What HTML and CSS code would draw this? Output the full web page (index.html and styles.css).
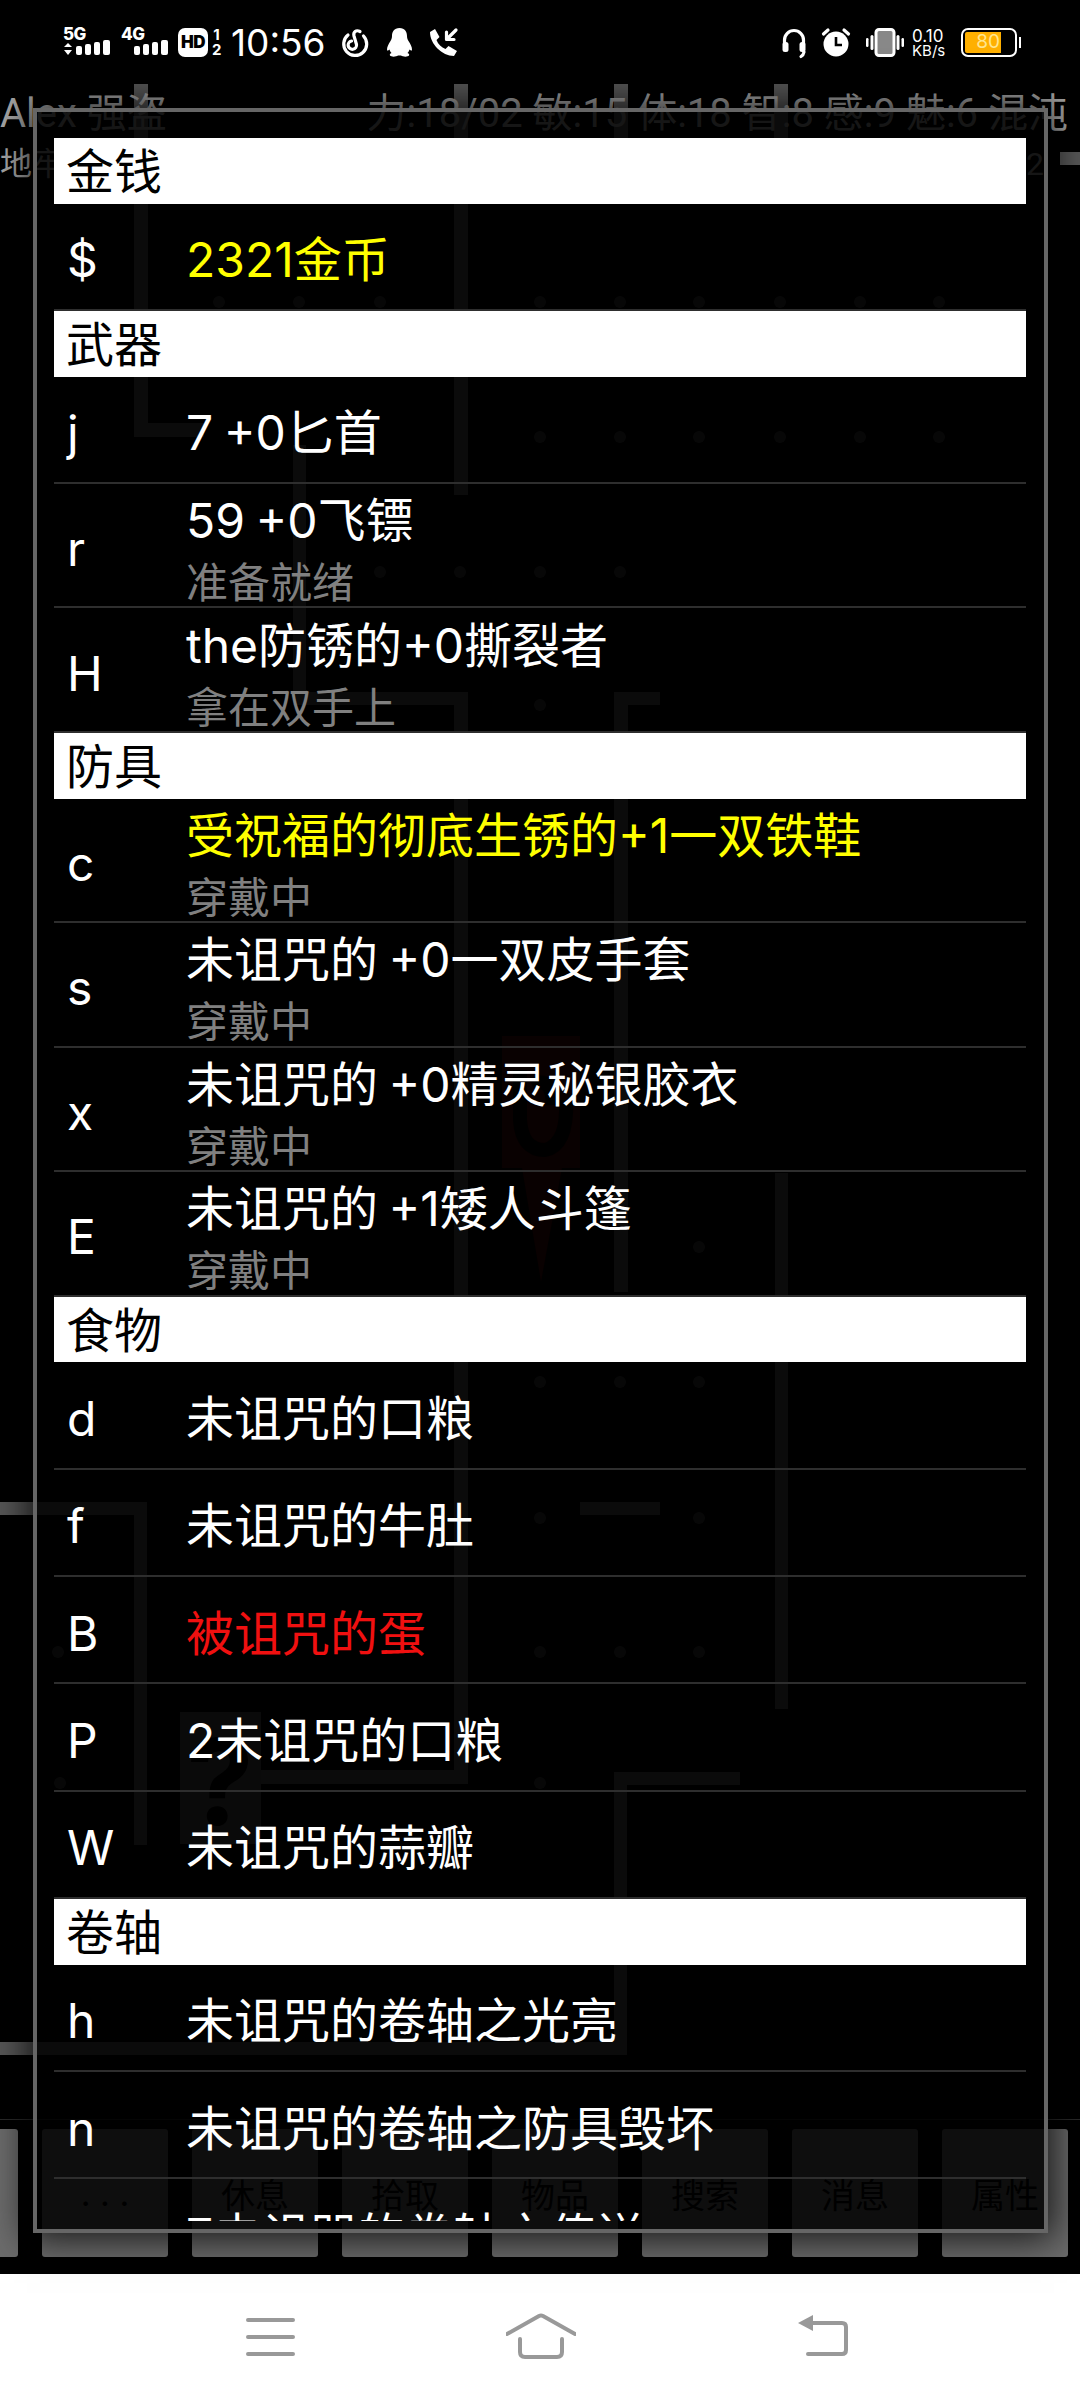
FILE: index.html
```html
<!DOCTYPE html>
<html lang="zh">
<head>
  <meta charset="UTF-8">
  <title>物品</title>
  <link rel="stylesheet" href="styles.css">
</head>
<body>
  <div class="status-bar">
    <div class="status-left">
      <svg class="icon" width="48" height="29" viewBox="0 0 48 29">
        <text class="net-label" x="0" y="12">5G</text>
        <path class="solid" d="M1 19 L5 15 L9 19 Z M1 22 L9 22 L5 27 Z"/>
        <rect class="solid" x="13" y="18" width="6" height="9" rx="2"/>
        <rect class="solid" x="22" y="16" width="6" height="11" rx="2"/>
        <rect class="solid" x="31" y="14" width="6" height="13" rx="2"/>
        <rect class="solid" x="40" y="12" width="7" height="15" rx="2"/>
      </svg>
      <svg class="icon" width="47" height="29" viewBox="0 0 47 29">
        <text class="net-label" x="0" y="12">4G</text>
        <rect class="solid" x="13" y="18" width="6" height="9" rx="2"/>
        <rect class="solid" x="22" y="16" width="6" height="11" rx="2"/>
        <rect class="solid" x="31" y="14" width="6" height="13" rx="2"/>
        <rect class="solid" x="40" y="12" width="7" height="15" rx="2"/>
      </svg>
      <div class="hd">
        <span class="hd-box">HD</span>
        <span class="hd-sim"><span>1</span><span>2</span></span>
      </div>
      <span class="clock">10:56</span>
      <svg class="icon" width="28" height="29" viewBox="0 0 28 29">
        <path class="line" d="M8 7 A11.5 11.5 0 1 0 23.5 8"/>
        <path class="line" d="M20 3.5 C16 1.5 13 4 14 8 L16.5 16.5 A4.2 4.2 0 1 1 11.5 13"/>
      </svg>
      <svg class="icon qq" width="27" height="29" viewBox="0 0 27 29">
        <path class="solid" d="M13.5 0 C8 0 6 4 6 8 C6 10 5.6 11 4.5 13 C2.5 16 1 19 1 21.5 C1 23 2 23 3.5 21.5 C4 23 4.5 24 5.5 25 C4 25.6 3.5 26.5 4 27.5 C5 29 10 29 12 27.5 L15 27.5 C17 29 22 29 23 27.5 C23.5 26.5 23 25.6 21.5 25 C22.5 24 23 23 23.5 21.5 C25 23 26 23 26 21.5 C26 19 24.5 16 22.5 13 C21.4 11 21 10 21 8 C21 4 19 0 13.5 0Z"/>
      </svg>
      <svg class="icon call" width="29" height="29" viewBox="0 0 29 29">
        <path class="solid" d="M1 4 L6 1 L10.5 9 L7.5 12 C9 16 12.5 19.5 16.5 21 L19.5 18 L28 23 L25 28 C13 28 1 16 1 4Z"/>
        <path class="line" d="M27 2 L18 11 M17.5 4 V11.5 H25"/>
      </svg>
    </div>
    <div class="status-right">
      <svg class="icon" width="24" height="29" viewBox="0 0 24 29">
        <path class="line" d="M2.5 16 V12 A9.5 9.5 0 0 1 21.5 12 V16"/>
        <rect class="solid" x="0.5" y="14" width="6" height="10" rx="2.5"/>
        <rect class="solid" x="17.5" y="14" width="6" height="10" rx="2.5"/>
        <path class="line" d="M22 24 Q21.5 27 19 28.5"/>
      </svg>
      <svg class="icon" width="30" height="29" viewBox="0 0 30 29">
        <circle class="solid" cx="15" cy="16" r="12.5"/>
        <path class="clock-hands" d="M15 9 V17 H21"/>
        <path class="line" d="M2.5 6 L7 2 M27.5 6 L23 2"/>
      </svg>
      <svg class="icon" width="38" height="29" viewBox="0 0 38 29">
        <rect class="vib-body" x="10" y="1.5" width="18" height="26" rx="3"/>
        <rect class="solid" x="4.5" y="7" width="3" height="15" rx="1.5"/>
        <rect class="solid" x="0" y="10" width="2.5" height="9" rx="1.2"/>
        <rect class="solid" x="30.5" y="7" width="3" height="15" rx="1.5"/>
        <rect class="solid" x="35.5" y="10" width="2.5" height="9" rx="1.2"/>
      </svg>
      <div class="speed"><span class="speed-num">0.10</span><span class="speed-unit">KB/s</span></div>
      <div class="battery-wrap">
        <div class="battery"><div class="battery-fill">80</div></div>
        <span class="battery-nub"></span>
      </div>
    </div>
  </div>

  <div class="game">
    <!-- dungeon map, everything here sits at its own spot on the screen -->
    <svg class="map" width="1080" height="2190" viewBox="0 84 1080 2190">
      <g class="wall">
        <rect x="134" y="84" width="14" height="353"/>
        <rect x="134" y="423" width="70" height="14"/>
        <rect x="454" y="84" width="14" height="411"/>
        <rect x="614" y="84" width="14" height="54"/>
        <rect x="774" y="84" width="14" height="54"/>
        <rect x="1060" y="152" width="20" height="13"/>
        <rect x="293" y="445" width="13" height="247"/>
        <rect x="293" y="692" width="175" height="13"/>
        <rect x="454" y="692" width="14" height="1090"/>
        <rect x="614" y="692" width="14" height="70"/>
        <rect x="614" y="692" width="46" height="13"/>
        <rect x="614" y="762" width="14" height="530"/>
        <rect x="775" y="1173" width="13" height="536"/>
        <rect x="0" y="1502" width="146" height="13"/>
        <rect x="134" y="1502" width="13" height="343"/>
        <rect x="580" y="1502" width="80" height="13"/>
        <rect x="260" y="1770" width="208" height="14"/>
        <rect x="614" y="1772" width="126" height="13"/>
        <rect x="614" y="1772" width="13" height="283"/>
        <rect x="0" y="2042" width="627" height="13"/>
      </g>
      <g class="floor">
        <circle cx="219" cy="302" r="6"/><circle cx="299" cy="302" r="6"/><circle cx="380" cy="302" r="6"/>
        <circle cx="540" cy="302" r="6"/><circle cx="620" cy="302" r="6"/><circle cx="699" cy="302" r="6"/>
        <circle cx="780" cy="302" r="6"/><circle cx="860" cy="302" r="6"/><circle cx="939" cy="302" r="6"/>
        <circle cx="540" cy="437" r="6"/><circle cx="620" cy="437" r="6"/><circle cx="699" cy="437" r="6"/>
        <circle cx="780" cy="437" r="6"/><circle cx="860" cy="437" r="6"/><circle cx="939" cy="437" r="6"/>
        <circle cx="380" cy="572" r="6"/><circle cx="460" cy="572" r="6"/><circle cx="540" cy="572" r="6"/><circle cx="620" cy="572" r="6"/>
        <circle cx="540" cy="705" r="6"/><circle cx="699" cy="1247" r="6"/>
        <circle cx="540" cy="1382" r="6"/><circle cx="620" cy="1382" r="6"/><circle cx="699" cy="1382" r="6"/>
        <circle cx="540" cy="1518" r="6"/><circle cx="699" cy="1518" r="6"/>
        <circle cx="58" cy="1652" r="6"/><circle cx="540" cy="1652" r="6"/><circle cx="620" cy="1652" r="6"/><circle cx="699" cy="1652" r="6"/>
        <circle cx="60" cy="1783" r="6"/><circle cx="540" cy="1783" r="6"/>
      </g>
      <g class="monster">
        <rect x="502" y="1036" width="78" height="132"/>
        <path d="M522 1168 L541 1282 L562 1168 Z"/>
      </g>
      <path class="monster-cut" d="M520 1070 V1120 Q522 1150 545 1150 Q568 1145 566 1100 M532 1085 Q552 1075 553 1105"/>
      <rect class="scroll-tile" x="180" y="1712" width="81" height="132"/>
      <text class="scroll-mark" x="220" y="1825">?</text>
    </svg>

    <div class="stats">
      <span>Alex 强盗</span>
      <span>力:18/02 敏:15 体:18 智:8 感:9 魅:6 混沌</span>
    </div>
    <div class="stats stats-small">
      <span>地牢</span>
      <span>2</span>
    </div>

    <div class="spacer"></div>

    <div class="actions">
      <button class="action-btn action-first"></button>
      <button class="action-btn">. . .</button>
      <button class="action-btn">休息</button>
      <button class="action-btn">拾取</button>
      <button class="action-btn">物品</button>
      <button class="action-btn">搜索</button>
      <button class="action-btn">消息</button>
      <button class="action-btn">属性</button>
    </div>

    <div class="dialog">
      <div class="inventory">
        <div class="group">金钱</div>
        <div class="item"><span class="key">$</span><div class="name-wrap"><div class="name gold">2321金币</div></div></div>

        <div class="group">武器</div>
        <div class="item"><span class="key">j</span><div class="name-wrap"><div class="name">7 +0匕首</div></div></div>
        <div class="item item-tall"><span class="key">r</span><div class="name-wrap"><div class="name">59 +0飞镖</div><div class="note">准备就绪</div></div></div>
        <div class="item item-tall"><span class="key">H</span><div class="name-wrap"><div class="name">the防锈的+0撕裂者</div><div class="note">拿在双手上</div></div></div>

        <div class="group">防具</div>
        <div class="item item-tall"><span class="key">c</span><div class="name-wrap"><div class="name gold">受祝福的彻底生锈的+1一双铁鞋</div><div class="note">穿戴中</div></div></div>
        <div class="item item-tall"><span class="key">s</span><div class="name-wrap"><div class="name">未诅咒的 +0一双皮手套</div><div class="note">穿戴中</div></div></div>
        <div class="item item-tall"><span class="key">x</span><div class="name-wrap"><div class="name">未诅咒的 +0精灵秘银胶衣</div><div class="note">穿戴中</div></div></div>
        <div class="item item-tall"><span class="key">E</span><div class="name-wrap"><div class="name">未诅咒的 +1矮人斗篷</div><div class="note">穿戴中</div></div></div>

        <div class="group">食物</div>
        <div class="item"><span class="key">d</span><div class="name-wrap"><div class="name">未诅咒的口粮</div></div></div>
        <div class="item"><span class="key">f</span><div class="name-wrap"><div class="name">未诅咒的牛肚</div></div></div>
        <div class="item"><span class="key">B</span><div class="name-wrap"><div class="name cursed">被诅咒的蛋</div></div></div>
        <div class="item"><span class="key">P</span><div class="name-wrap"><div class="name">2未诅咒的口粮</div></div></div>
        <div class="item"><span class="key">W</span><div class="name-wrap"><div class="name">未诅咒的蒜瓣</div></div></div>

        <div class="group">卷轴</div>
        <div class="item"><span class="key">h</span><div class="name-wrap"><div class="name">未诅咒的卷轴之光亮</div></div></div>
        <div class="item"><span class="key">n</span><div class="name-wrap"><div class="name">未诅咒的卷轴之防具毁坏</div></div></div>
        <div class="item"><span class="key">o</span><div class="name-wrap"><div class="name">7未诅咒的卷轴之传送</div></div></div>
      </div>
    </div>
  </div>

  <div class="nav-bar">
    <svg class="nav-icon" width="50" height="46" viewBox="0 0 50 46">
      <path d="M2 7 H47 M2 24 H47 M2 41 H47"/>
    </svg>
    <svg class="nav-icon nav-home" width="70" height="46" viewBox="0 0 70 46">
      <path d="M1 21 L33 3 Q35 2 37 3 L69 21"/>
      <path d="M14 26 V39 Q14 44 19 44 H51 Q56 44 56 39 V26"/>
    </svg>
    <svg class="nav-icon nav-back" width="50" height="46" viewBox="0 0 50 46">
      <path class="nav-arrow" d="M0 10 L15 2 V18 Z"/>
      <path d="M14 10 H44 Q48 10 48 14 V37 Q48 41 44 41 H10"/>
    </svg>
  </div>
</body>
</html>
```

FILE: styles.css
```css
* {
  box-sizing: border-box;
}
body {
  margin: 0;
  width: 1080px;
  height: 2400px;
  background-color: #000;
  color: #fff;
  font-family: Inter, "Noto Sans CJK SC", sans-serif;
  display: flex;
  flex-direction: column;
  overflow: hidden;
}

/* status bar */
.status-bar {
  height: 84px;
  padding: 28px 59px 0 63px;
  display: flex;
  justify-content: space-between;
  align-items: flex-start;
  flex-shrink: 0;
}
.status-left, .status-right {
  display: flex;
  align-items: flex-start;
  gap: 10px;
}
.status-right {
  gap: 15px;
}
.icon {
  display: block;
  overflow: visible;
}
.solid {
  fill: #fff;
}
.line {
  fill: none;
  stroke: #fff;
  stroke-width: 3.2;
  stroke-linecap: round;
  stroke-linejoin: round;
}
.net-label {
  fill: #fff;
  font-size: 17px;
  font-weight: 800;
  letter-spacing: -0.5px;
}
.hd {
  display: flex;
  gap: 4px;
}
.hd-box {
  width: 30px;
  height: 29px;
  background-color: #fff;
  color: #000;
  border-radius: 7px;
  font-size: 17px;
  font-weight: 900;
  line-height: 29px;
  text-align: center;
  letter-spacing: -0.5px;
}
.hd-sim {
  width: 9px;
  display: flex;
  flex-direction: column;
  justify-content: space-between;
  height: 29px;
  font-size: 15px;
  font-weight: 700;
  line-height: 14px;
  text-align: center;
}
.clock {
  margin-right: 4px;
  font-size: 37px;
  line-height: 30px;
}
.qq {
  margin-left: 8px;
}
.call {
  margin-left: 6px;
}
.clock-hands {
  fill: none;
  stroke: #000;
  stroke-width: 2.6;
}
.vib-body {
  fill: #888;
  stroke: #fff;
  stroke-width: 3;
}
.speed {
  margin-left: -7px;
  display: flex;
  flex-direction: column;
  width: 34px;
  white-space: nowrap;
}
.speed-num {
  font-size: 17px;
  line-height: 16px;
}
.speed-unit {
  font-size: 15px;
  line-height: 14px;
}
.battery-wrap {
  display: flex;
  align-items: center;
  gap: 2px;
  height: 29px;
}
.battery {
  width: 56px;
  height: 29px;
  border: 2.5px solid #fff;
  border-radius: 7px;
  padding: 2px;
}
.battery-fill {
  width: 36px;
  height: 100%;
  background-color: #ffb000;
  border-radius: 2px 0 0 2px;
  color: #ffe68f;
  font-size: 19px;
  line-height: 20px;
  text-align: right;
  padding-right: 1px;
}
.battery-nub {
  width: 2px;
  height: 11px;
  background-color: #fff;
}

/* game screen behind the dialog */
.game {
  position: relative;
  flex: 1;
  display: flex;
  flex-direction: column;
}
.map {
  position: absolute;
  left: 0;
  top: 0;
}
.wall {
  fill: #585858;
}
.floor {
  fill: #3c3c3c;
}
.monster {
  fill: #480808;
}
.monster-cut {
  fill: none;
  stroke: #000;
  stroke-width: 14;
}
.scroll-tile {
  fill: #4c4c4c;
}
.scroll-mark {
  fill: #000;
  font-size: 120px;
  font-weight: 700;
  text-anchor: middle;
}
.stats {
  position: relative;
  display: flex;
  justify-content: space-between;
  padding-top: 2px;
  padding-right: 12px;
  font-family: Roboto, "Noto Sans CJK SC", sans-serif;
  font-size: 40px;
  line-height: 56px;
  color: #aaa;
  white-space: nowrap;
}
.stats-small {
  padding-top: 1px;
  padding-right: 36px;
  font-size: 32px;
  line-height: 42px;
}
.spacer {
  flex: 1;
}
.actions {
  position: relative;
  height: 155px;
  padding: 9px 0 18px;
  margin-left: 0;
  border-top: 1px solid #2a2a2a;
  display: flex;
  gap: 24px;
  overflow: hidden;
}
.action-btn {
  flex: 0 0 126px;
  height: 128px;
  padding: 0;
  border: none;
  border-radius: 3px;
  background-color: #6c6c6c;
  color: #000;
  font-family: inherit;
  font-size: 34px;
}
.action-first {
  margin-left: -108px;
}

/* inventory dialog */
.dialog {
  position: absolute;
  left: 33px;
  top: 24px;
  width: 1015px;
  height: 2125px;
  padding: 26px 18px 8px 17px;
  border: 4px solid #666;
  background-color: rgba(0, 0, 0, 0.87);
  box-shadow: 0 0 36px 6px rgba(0, 0, 0, 0.8);
}
.inventory {
  height: 100%;
  overflow: hidden;
}
.group {
  height: 65.6px;
  padding-left: 12px;
  background-color: #fff;
  color: #000;
  font-size: 48px;
  line-height: 68px;
}
.item {
  height: 107.4px;
  padding-left: 13px;
  border-bottom: 2px solid #2e2e2e;
  display: flex;
  align-items: center;
}
.item-tall {
  height: 124.5px;
}
.key {
  flex: 0 0 119px;
  padding-top: 8px;
  font-size: 48px;
  line-height: 60px;
}
.name-wrap {
  padding-top: 8px;
}
.item-tall .name-wrap {
  padding-top: 11px;
}
.name {
  font-size: 48px;
  line-height: 62px;
  white-space: nowrap;
  word-spacing: -3px;
}
.note {
  margin-top: 3px;
  font-size: 42px;
  line-height: 56px;
  color: #808080;
}
.gold {
  color: #ffff00;
}
.cursed {
  color: #f01010;
}

/* navigation bar */
.nav-bar {
  height: 126px;
  padding: 39px 0 0 246px;
  background-color: #fff;
  display: flex;
  align-items: flex-start;
  flex-shrink: 0;
}
.nav-icon {
  display: block;
  fill: none;
  stroke: #999;
  stroke-width: 4;
  stroke-linecap: round;
  stroke-linejoin: round;
}
.nav-home {
  margin-left: 210px;
}
.nav-back {
  margin-left: 222px;
}
.nav-arrow {
  fill: #999;
  stroke: none;
}
```
